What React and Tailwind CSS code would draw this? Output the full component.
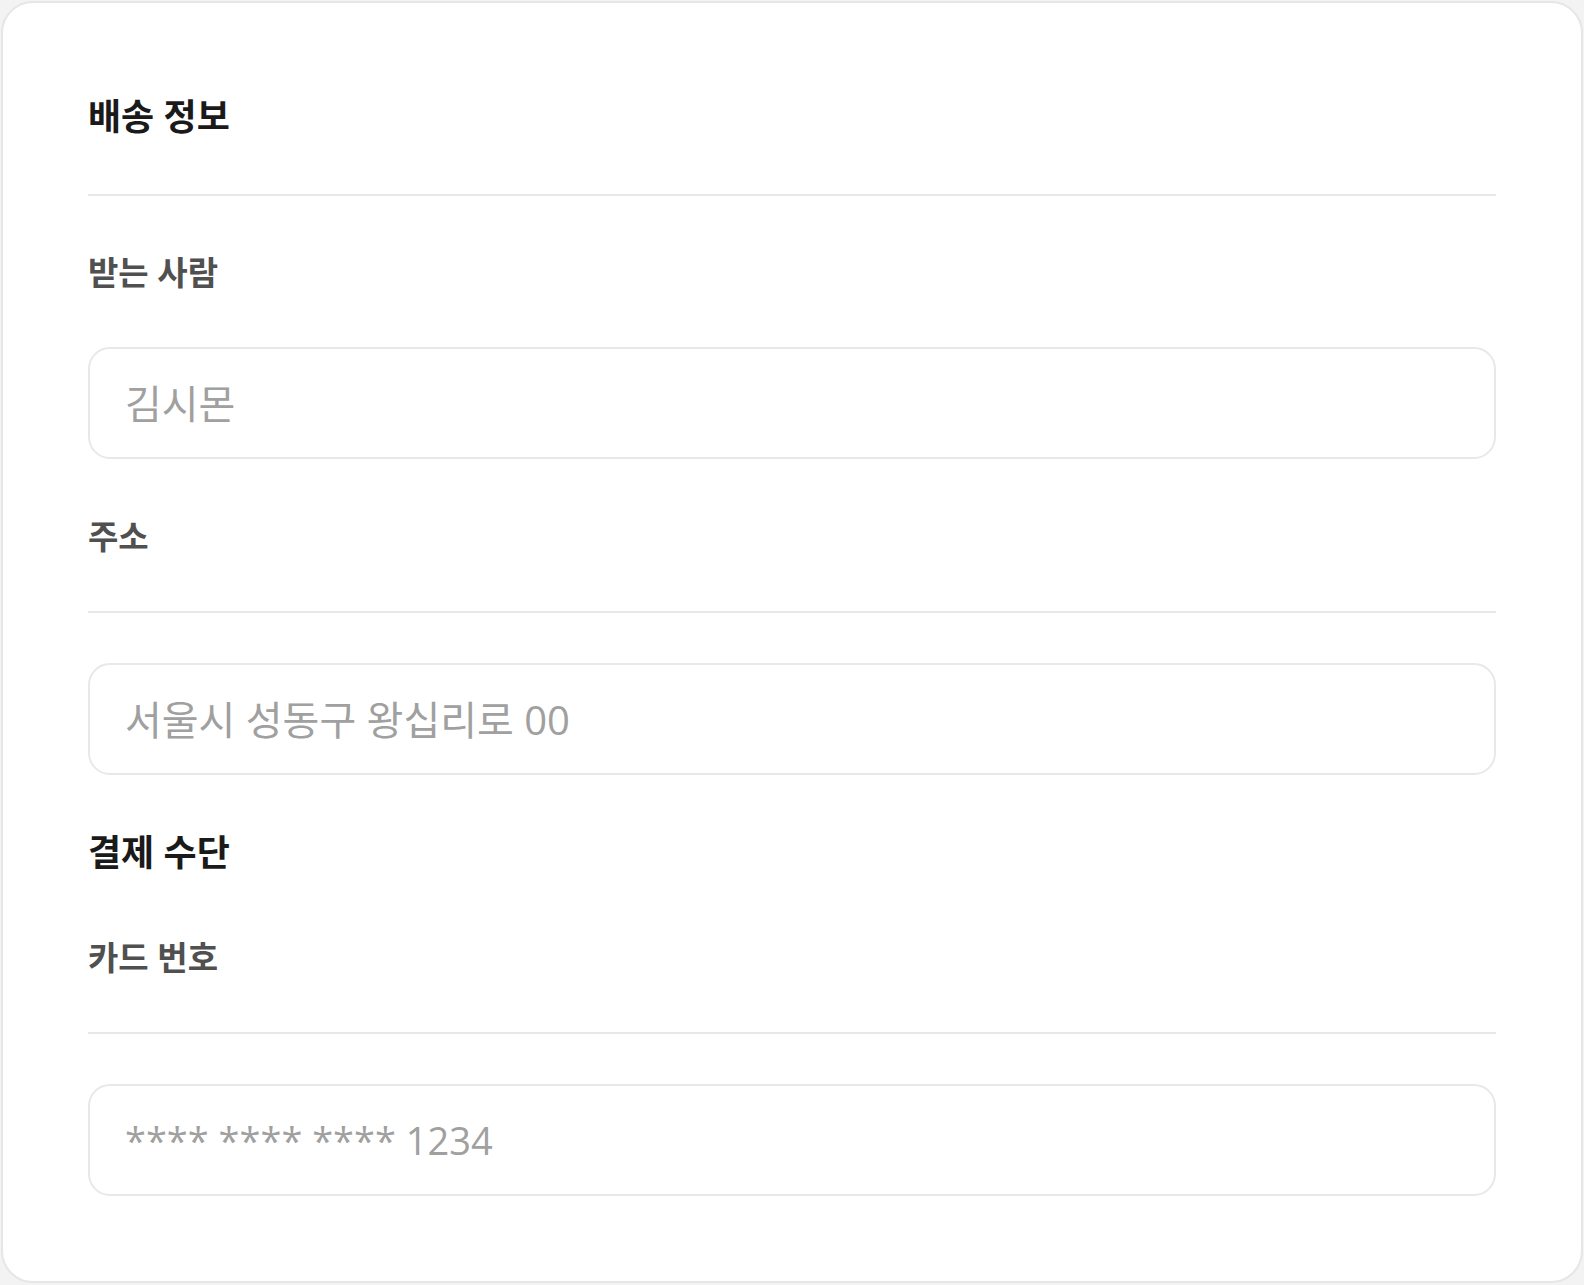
export default function App() {
  return (
    <div className="min-h-screen bg-[#f3f3f3] p-px font-['Open_Sans','Noto_Sans_CJK_KR',sans-serif]">
      <div className="flex flex-col rounded-[32px] border-2 border-[#e6e6e6] bg-white px-[85px] pt-[94px] pb-[85px]">
        <h2 className="h-[40px] text-[36px] leading-[40px] font-bold text-[#1a1a1a]">배송 정보</h2>
        <div className="mt-[57px] h-[2px] bg-[#e8e8e8]" />
        <label className="mt-[59px] h-[36px] text-[33px] leading-[36px] font-semibold text-[#505050]">받는 사람</label>
        <input
          className="mt-[56px] h-[112px] w-full rounded-[22px] border-2 border-[#e8e8e8] bg-white px-[35px] text-[40px] text-[#333] outline-none placeholder:text-[#a0a0a0]"
          placeholder="김시몬"
        />
        <label className="mt-[60px] h-[36px] text-[33px] leading-[36px] font-semibold text-[#505050]">주소</label>
        <div className="mt-[56px] h-[2px] bg-[#e8e8e8]" />
        <input
          className="mt-[50px] h-[112px] w-full rounded-[22px] border-2 border-[#e8e8e8] bg-white px-[35px] text-[40px] text-[#333] outline-none placeholder:text-[#a0a0a0]"
          placeholder="서울시 성동구 왕십리로 00"
        />
        <h2 className="mt-[58px] h-[40px] text-[36px] leading-[40px] font-bold text-[#1a1a1a]">결제 수단</h2>
        <label className="mt-[67px] h-[36px] text-[33px] leading-[36px] font-semibold text-[#505050]">카드 번호</label>
        <div className="mt-[56px] h-[2px] bg-[#e8e8e8]" />
        <input
          className="mt-[50px] h-[112px] w-full rounded-[22px] border-2 border-[#e8e8e8] bg-white px-[35px] text-[38px] text-[#333] outline-none placeholder:text-[#a0a0a0]"
          placeholder="**** **** **** 1234"
        />
      </div>
    </div>
  );
}
